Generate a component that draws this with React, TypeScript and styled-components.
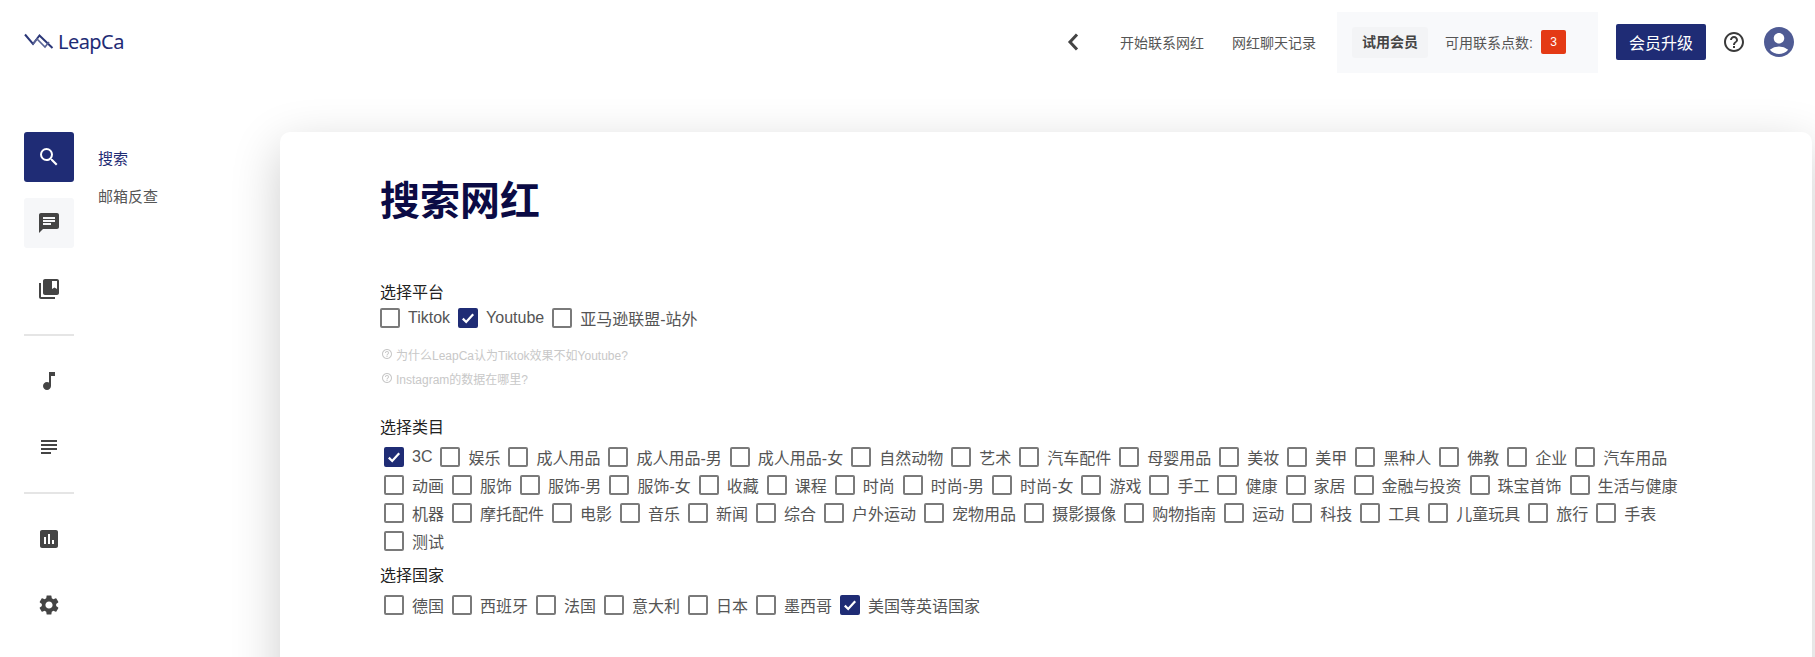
import React from 'react';
import styled, { createGlobalStyle } from 'styled-components';
import {
  MdSearch,
  MdChat,
  MdCollectionsBookmark,
  MdMusicNote,
  MdSubject,
  MdAssessment,
  MdSettings,
  MdHelpOutline,
  MdAccountCircle,
} from 'react-icons/md';

const NAVY = '#1f2c75';
const FONT = '"Liberation Sans", "Noto Sans CJK SC", sans-serif';

const GlobalStyle = createGlobalStyle`
  html, body {
    margin: 0;
    padding: 0;
    height: 100%;
    background: #fff;
    overflow: hidden;
  }
  body {
    font-family: ${FONT};
  }
`;

const Page = styled.div`
  width: 1815px;
  height: 657px;
  overflow: hidden;
  display: flex;
  flex-direction: column;
`;

// Top bar
const Header = styled.header`
  height: 84px;
  flex: none;
  display: flex;
  align-items: center;
  justify-content: space-between;
  padding: 0 18px 0 24px;
`;

const Logo = styled.div`
  display: flex;
  align-items: center;
  gap: 4px;
  color: ${NAVY};
`;

const LogoMark = styled.svg`
  margin-top: -2px;
`;

const LogoText = styled.span`
  font-family: 'Noto Sans', sans-serif;
  font-size: 20px;
  line-height: 24px;
  letter-spacing: -0.55px;
`;

const HeaderRight = styled.div`
  display: flex;
  align-items: center;
`;

const BackIcon = styled.svg`
  margin-right: 41px;
`;

const TopLink = styled.a`
  font-size: 14px;
  color: #555;
  margin-right: 28px;
  &:last-of-type {
    margin-right: 21px;
  }
`;

const PlanPanel = styled.div`
  height: 61px;
  display: flex;
  align-items: center;
  padding: 0 32px 0 15px;
  background: #f8f9fb;
  margin-right: 18px;
`;

const PlanChip = styled.div`
  height: 31px;
  line-height: 31px;
  padding: 0 10px;
  border-radius: 3px;
  background: #f3f4f6;
  font-size: 14px;
  font-weight: 700;
  color: #444;
  margin-right: 17px;
`;

const PointsLabel = styled.span`
  font-size: 14px;
  color: #555;
  margin-right: 8px;
`;

const PointsBadge = styled.span`
  width: 25px;
  height: 24px;
  line-height: 24px;
  border-radius: 2px;
  background: #e43a15;
  color: #fff;
  font-size: 12px;
  text-align: center;
`;

const UpgradeButton = styled.button`
  width: 90px;
  height: 36px;
  padding: 0;
  border: 0;
  border-radius: 2px;
  background: ${NAVY};
  color: #fff;
  font-family: ${FONT};
  font-size: 16px;
  margin-right: 16px;
`;

const HelpIcon = styled(MdHelpOutline)`
  font-size: 24px;
  color: #3a3a3a;
  margin-right: 15px;
`;

const AvatarIcon = styled(MdAccountCircle)`
  font-size: 36px;
  color: #4f5b94;
`;

// Everything under the top bar
const Body = styled.div`
  flex: 1;
  display: flex;
  align-items: flex-start;
  padding: 48px 3px 0 24px;
`;

const Rail = styled.nav`
  width: 50px;
  flex: none;
  display: flex;
  flex-direction: column;
  gap: 16px;
`;

const RailButton = styled.div<{ $state?: 'active' | 'soft' }>`
  width: 50px;
  height: 50px;
  border-radius: 3px;
  display: flex;
  align-items: center;
  justify-content: center;
  font-size: 24px;
  color: ${(p) => (p.$state === 'active' ? '#fff' : '#444')};
  background: ${(p) =>
    p.$state === 'active' ? NAVY : p.$state === 'soft' ? '#f6f7f9' : 'transparent'};
`;

const RailDivider = styled.div`
  height: 2px;
  margin: 4px 0;
  background: #e5e5e5;
`;

const SubNav = styled.nav`
  width: 206px;
  flex: none;
  padding: 8px 0 0 24px;
  box-sizing: border-box;
`;

const SubNavItem = styled.div<{ $active?: boolean }>`
  font-size: 15px;
  line-height: 38px;
  color: ${(p) => (p.$active ? NAVY : '#555')};
`;

const Card = styled.main`
  flex: 1;
  height: 640px;
  box-sizing: border-box;
  padding: 45px 100px 0;
  background: #fff;
  border-radius: 10px;
  box-shadow: 0 15px 50px rgba(0, 0, 0, 0.2);
`;

const Title = styled.h1`
  margin: 0 0 55px;
  font-size: 40px;
  line-height: 48px;
  font-weight: 700;
  color: #0b0b45;
`;

const SectionLabel = styled.div<{ $top?: number }>`
  padding-top: 2px;
  font-size: 16px;
  line-height: 22px;
  color: #222;
  margin-top: ${(p) => p.$top ?? 0}px;
`;

const OptionRow = styled.div<{ $inset?: boolean; $top?: number }>`
  display: flex;
  flex-wrap: wrap;
  column-gap: 8px;
  padding-left: ${(p) => (p.$inset ? 4 : 0)}px;
  margin-top: ${(p) => p.$top ?? 0}px;
`;

const Option = styled.label`
  height: 28px;
  display: flex;
  align-items: center;
  gap: 8px;
  font-size: 16px;
  color: #555;
  white-space: nowrap;
`;

const Box = styled.span<{ $checked?: boolean }>`
  width: 20px;
  height: 20px;
  box-sizing: border-box;
  border-radius: 2px;
  display: flex;
  align-items: center;
  justify-content: center;
  border: 2px solid ${(p) => (p.$checked ? NAVY : '#7a7a7a')};
  background: ${(p) => (p.$checked ? NAVY : '#fff')};
`;

const Hints = styled.div`
  margin-top: 10px;
`;

const Hint = styled.div`
  height: 24px;
  display: flex;
  align-items: center;
  gap: 3px;
  padding-left: 1px;
  font-size: 12px;
  color: #c8c8c8;
`;

const HintIcon = styled(MdHelpOutline)`
  font-size: 12px;
  color: #c8c8c8;
`;

function CheckOption({ label, checked }: { label: string; checked?: boolean }) {
  return (
    <Option>
      <Box $checked={checked}>
        {checked && (
          <svg width="14" height="14" viewBox="0 0 14 14">
            <path d="M1.8 7.6 L5.2 11 L12.2 3.2" fill="none" stroke="#fff" strokeWidth="2.2" />
          </svg>
        )}
      </Box>
      {label}
    </Option>
  );
}

const categories = [
  '3C', '娱乐', '成人用品', '成人用品-男', '成人用品-女', '自然动物', '艺术', '汽车配件', '母婴用品',
  '美妆', '美甲', '黑种人', '佛教', '企业', '汽车用品', '动画', '服饰', '服饰-男', '服饰-女', '收藏',
  '课程', '时尚', '时尚-男', '时尚-女', '游戏', '手工', '健康', '家居', '金融与投资', '珠宝首饰',
  '生活与健康', '机器', '摩托配件', '电影', '音乐', '新闻', '综合', '户外运动', '宠物用品', '摄影摄像',
  '购物指南', '运动', '科技', '工具', '儿童玩具', '旅行', '手表', '测试',
];

const countries = ['德国', '西班牙', '法国', '意大利', '日本', '墨西哥', '美国等英语国家'];

export default function App() {
  return (
    <>
      <GlobalStyle />
      <Page>
        <Header>
          <Logo>
            <LogoMark width="30" height="16" viewBox="0 0 30 16">
              <path d="M1 1.5 L9 11 L15.5 2.5 L28.5 15" fill="none" stroke="#2b3778" strokeWidth="2" />
              <path d="M9 11 L13 6 L21 14 L25 9" fill="none" stroke="#5a6496" strokeWidth="1.6" />
            </LogoMark>
            <LogoText>LeapCa</LogoText>
          </Logo>
          <HeaderRight>
            <BackIcon width="12" height="18" viewBox="0 0 12 18">
              <path d="M10 1.5 L3 9 L10 16.5" fill="none" stroke="#444" strokeWidth="3" />
            </BackIcon>
            <TopLink>开始联系网红</TopLink>
            <TopLink>网红聊天记录</TopLink>
            <PlanPanel>
              <PlanChip>试用会员</PlanChip>
              <PointsLabel>可用联系点数:</PointsLabel>
              <PointsBadge>3</PointsBadge>
            </PlanPanel>
            <UpgradeButton>会员升级</UpgradeButton>
            <HelpIcon />
            <AvatarIcon />
          </HeaderRight>
        </Header>

        <Body>
          <Rail>
            <RailButton $state="active"><MdSearch /></RailButton>
            <RailButton $state="soft"><MdChat /></RailButton>
            <RailButton><MdCollectionsBookmark /></RailButton>
            <RailDivider />
            <RailButton><MdMusicNote /></RailButton>
            <RailButton><MdSubject /></RailButton>
            <RailDivider />
            <RailButton><MdAssessment /></RailButton>
            <RailButton><MdSettings /></RailButton>
          </Rail>

          <SubNav>
            <SubNavItem $active>搜索</SubNavItem>
            <SubNavItem>邮箱反查</SubNavItem>
          </SubNav>

          <Card>
            <Title>搜索网红</Title>

            <SectionLabel>选择平台</SectionLabel>
            <OptionRow>
              <CheckOption label="Tiktok" />
              <CheckOption label="Youtube" checked />
              <CheckOption label="亚马逊联盟-站外" />
            </OptionRow>
            <Hints>
              <Hint><HintIcon />为什么LeapCa认为Tiktok效果不如Youtube?</Hint>
              <Hint><HintIcon />Instagram的数据在哪里?</Hint>
            </Hints>

            <SectionLabel $top={25}>选择类目</SectionLabel>
            <OptionRow $inset $top={4}>
              {categories.map((c) => (
                <CheckOption key={c} label={c} checked={c === '3C'} />
              ))}
            </OptionRow>

            <SectionLabel $top={8}>选择国家</SectionLabel>
            <OptionRow $inset $top={4}>
              {countries.map((c) => (
                <CheckOption key={c} label={c} checked={c === '美国等英语国家'} />
              ))}
            </OptionRow>
          </Card>
        </Body>
      </Page>
    </>
  );
}
